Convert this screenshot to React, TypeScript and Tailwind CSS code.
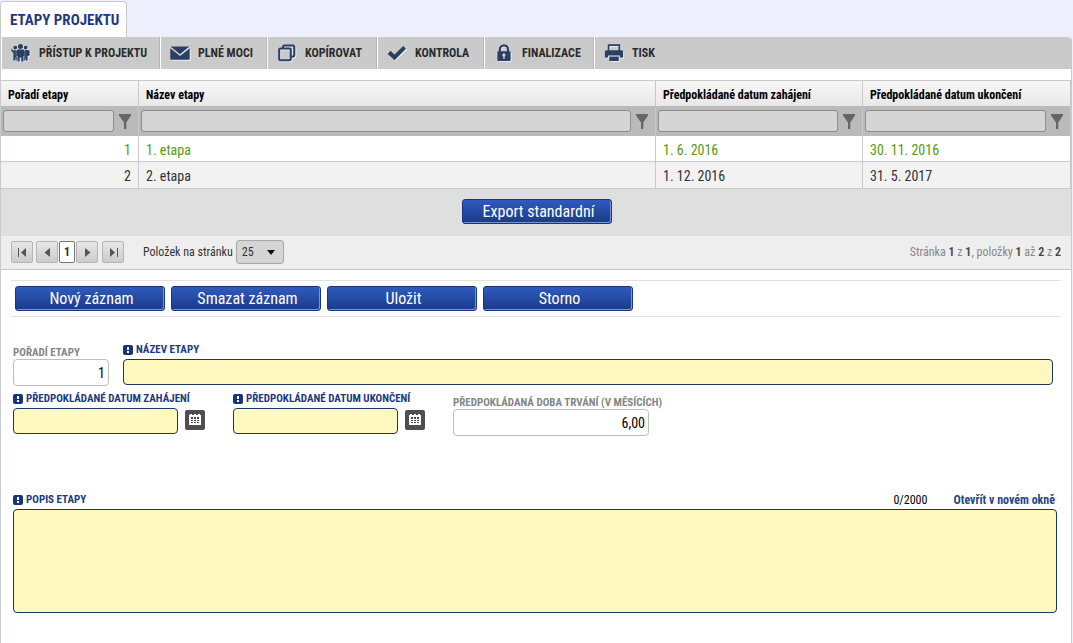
import type { ReactNode } from "react";

const blueButton =
  "h-[25px] w-[150px] rounded-[3px] border border-[#16357d] bg-linear-to-b from-[#2f5bbd] to-[#1b3a8a] pl-[3px] text-base leading-5 text-white shadow-[inset_-1px_-1px_0_#7d95cf]";
const requiredBox =
  "rounded-[4px] border border-[#1c355e] bg-[#fff9bf] px-1 text-sm text-black outline-none";
const optionalBox =
  "h-[27px] rounded-[4px] border border-[#bdbdbd] bg-white px-[3px] text-right text-sm text-black outline-none";
const pagerButton =
  "flex h-[22px] w-[22px] items-center justify-center rounded-[2px] border border-[#b4b4b4] bg-linear-to-b from-[#e6e6e6] to-[#cccccc]";

function IconFrame({ children }: { children: ReactNode }) {
  return (
    <svg
      width="20"
      height="20"
      viewBox="0 0 20 20"
      fill="#2b3f63"
      className="shrink-0 drop-shadow-[1px_1px_0_#e6edf5]"
      aria-hidden="true"
    >
      {children}
    </svg>
  );
}

function PeopleIcon() {
  return (
    <IconFrame>
      <circle cx="9.500" cy="3.400" r="2.500" />
      <circle cx="4.300" cy="4.600" r="1.900" />
      <circle cx="14.700" cy="4.600" r="1.900" />
      <path d="M6.400 6.500h6.200l1.200 1.500v5h-1.300v5.500h-2.200v-4h-1.600v4H6.500V13H5.200V8z" />
      <path d="M.4 5.400l1.500 1.900h3v5.900h.9v4.200H4.400v-3H4v3H2.400V10L.4 8z" />
      <path d="M18.600 8.200l-1.200-1.200h-3.300v6.200h-.9v4.200h1.400v-3h.4v3h1.600v-4.600h2z" />
    </IconFrame>
  );
}

function MailIcon() {
  return (
    <IconFrame>
      <path d="M.6 3.600h18.800L10 11.200z" />
      <path d="M.3 5.300L10 13l9.700-7.700v10.200q0 1.200-1.200 1.200H1.500q-1.200 0-1.200-1.200z" />
    </IconFrame>
  );
}

function CopyIcon() {
  return (
    <IconFrame>
      <path
        d="M6 5.400V3.800q0-1.200 1.200-1.200H16q1.300 0 1.300 1.300v8.300q0 1.300-1.300 1.300h-1.200M3.400 5.500h9.200q1.200 0 1.200 1.200v9.400q0 1.200-1.200 1.200H3.400q-1.200 0-1.200-1.200V6.700q0-1.200 1.200-1.200z"
        fill="none"
        stroke="#2b3f63"
        strokeWidth="2"
      />
    </IconFrame>
  );
}

function CheckIcon() {
  return (
    <IconFrame>
      <path d="M.6 11l3-3.200 3.900 3.600L16.200 3 19 5.800 7.600 17.200z" />
    </IconFrame>
  );
}

function LockIcon() {
  return (
    <IconFrame>
      <path d="M5.900 9V6.400a4.100 4.100 0 0 1 8.200 0V9" fill="none" stroke="#2b3f63" strokeWidth="2.3" />
      <path
        fillRule="evenodd"
        d="M4.500 8.200h11q1.100 0 1.100 1.100v7.600q0 1.100-1.100 1.100h-11q-1.100 0-1.100-1.100V9.300q0-1.100 1.100-1.100zM10 10.600a1.500 1.500 0 0 0-.7 2.800v2.400h1.400v-2.400a1.500 1.500 0 0 0-.7-2.800z"
      />
    </IconFrame>
  );
}

function PrinterIcon() {
  return (
    <IconFrame>
      <path d="M4.600 8V2.200h10.800V8" fill="none" stroke="#2b3f63" strokeWidth="1.700" />
      <path d="M2.400 7.300h15.200q1.500 0 1.500 1.500v5.700h-3.200v-2.100H4.100v2.100H.9V8.800q0-1.500 1.500-1.500z" />
      <path d="M5.300 13.600h9.400V18H5.300z" />
    </IconFrame>
  );
}

function FilterIcon() {
  return (
    <svg width="12" height="16" viewBox="0 0 12 16" fill="#666" aria-hidden="true">
      <path d="M0 0h12v1.500L7.300 8.500V15H5V8.500L0 1.500z" />
    </svg>
  );
}

function CalendarIcon() {
  return (
    <svg width="12" height="12" viewBox="0 0 12 12" shapeRendering="crispEdges" aria-hidden="true">
      <path d="M0 1h1V0h2v1h2V0h2v1h2V0h2v1h1v10H0z" fill="#fff" />
      <path
        d="M2 3h2v2H2zM5 3h2v2H5zM8 3h2v2H8zM2 6h2v1H2zM5 6h2v1H5zM8 6h2v1H8zM2 8h2v1H2zM5 8h2v1H5zM8 8h2v1H8z"
        fill="#4a4a4a"
      />
    </svg>
  );
}

function RequiredMark() {
  return (
    <svg width="10" height="10" viewBox="0 0 10 10" aria-hidden="true">
      <rect width="10" height="10" rx="2" fill="#16357d" />
      <path d="M4 2h2v3H4zM4 6h2v2H4z" fill="#fff" />
    </svg>
  );
}

function RequiredLabel({ id, children }: { id: string; children: ReactNode }) {
  return (
    <label
      htmlFor={id}
      className="flex h-[17px] items-center gap-[3px] whitespace-nowrap text-[11px] leading-4 font-bold text-[#1b3a80]"
    >
      <RequiredMark />
      {children}
    </label>
  );
}

function OptionalLabel({ id, children }: { id: string; children: ReactNode }) {
  return (
    <label
      htmlFor={id}
      className="mt-1 block h-[14px] whitespace-nowrap text-[11px] leading-4 font-bold text-[#858585]"
    >
      {children}
    </label>
  );
}

function DateField({ id, label }: { id: string; label: string }) {
  return (
    <div className="flex w-[220px] flex-col gap-px">
      <RequiredLabel id={id}>{label}</RequiredLabel>
      <div className="flex items-start gap-[7px]">
        <input id={id} type="text" className={`${requiredBox} h-[26px] w-[165px]`} />
        <button
          type="button"
          aria-label="Kalendář"
          className="mt-[2px] flex h-5 w-5 items-center justify-center rounded-[2px] bg-[#4f4f4f]"
        >
          <CalendarIcon />
        </button>
      </div>
    </div>
  );
}

const tools = [
  { label: "PŘÍSTUP K PROJEKTU", icon: <PeopleIcon />, width: "w-[159px]" },
  { label: "PLNÉ MOCI", icon: <MailIcon />, width: "w-[107px]" },
  { label: "KOPÍROVAT", icon: <CopyIcon />, width: "w-[110px]" },
  { label: "KONTROLA", icon: <CheckIcon />, width: "w-[107px]" },
  { label: "FINALIZACE", icon: <LockIcon />, width: "w-[110px]" },
  { label: "TISK", icon: <PrinterIcon />, width: "w-[90px]" },
];

const columns = [
  { name: "Pořadí etapy", width: "w-[138px]" },
  { name: "Název etapy", width: "" },
  { name: "Předpokládané datum zahájení", width: "w-[207px]" },
  { name: "Předpokládané datum ukončení", width: "w-[208px]" },
];

const rows = [
  { order: 1, name: "1. etapa", start: "1. 6. 2016", end: "30. 11. 2016", style: "h-[26px] bg-white text-[#559a0f]" },
  { order: 2, name: "2. etapa", start: "1. 12. 2016", end: "31. 5. 2017", style: "h-[27px] bg-[#f2f2f2] text-[#333]" },
];

const cell = "border-r border-b border-[#c9c9c9] px-[7px] pt-[2px] pb-0";

export default function App() {
  return (
    <div className="min-h-screen bg-[#edf0fc] pr-px font-['Roboto_Condensed','Liberation_Sans_Narrow',Roboto,sans-serif] text-[#333]">
      <nav className="flex h-[37px] items-end">
        <a
          href="#etapy"
          className="flex h-9 items-center rounded-t-[4px] border border-b-0 border-[#c9c9c9] bg-white pt-[2px] pr-[7px] pl-[9px] text-[15px] font-bold text-[#1f3a80]"
        >
          ETAPY PROJEKTU
        </a>
      </nav>
      <main className="min-h-[calc(100vh-37px)] rounded-tr-[4px] border-x border-[#c8cad2] bg-white">
        <div className="flex h-8 rounded-tr-[4px] bg-[#cacaca]">
          {tools.map((t, i) => (
            <button
              key={t.label}
              type="button"
              className={`${t.width} flex items-center gap-2 whitespace-nowrap border-l border-l-white pl-[9px] text-xs font-bold text-[#2b2b2b] ${i < 5 ? "border-r border-r-[#b5b5b5]" : ""}`}
            >
              {t.icon}
              {t.label}
            </button>
          ))}
        </div>

        <table className="mt-[11px] w-full table-fixed border-separate border-spacing-0 border-t border-[#c9c9c9] text-left">
          <thead>
            <tr className="h-[25px]">
              {columns.map((c) => (
                <th
                  key={c.name}
                  scope="col"
                  className={`${c.width} border-r border-[#c9c9c9] bg-linear-to-b from-[#f7f7f7] to-[#e8e8e8] px-[7px] pt-[2px] pb-0 text-xs font-bold whitespace-nowrap text-black`}
                >
                  {c.name}
                </th>
              ))}
            </tr>
            <tr className="h-[30px]">
              {columns.map((c) => (
                <td key={c.name} className="border-r border-[#c9c9c9] bg-[#bababa] p-0">
                  <div className="flex items-center gap-[5px] pr-[7px] pl-[2px]">
                    <input
                      type="text"
                      aria-label={`Filtr: ${c.name}`}
                      className="h-[22px] w-0 min-w-0 flex-1 rounded-[3px] border border-[#8c8c8c] bg-[#d5d5d5] px-1 text-sm outline-none"
                    />
                    <button type="button" aria-label={`Filtrovat: ${c.name}`} className="pt-[2px]">
                      <FilterIcon />
                    </button>
                  </div>
                </td>
              ))}
            </tr>
          </thead>
          <tbody>
            {rows.map((r) => (
              <tr key={r.order} className={`${r.style} text-sm leading-5`}>
                <td className={`${cell} text-right`}>{r.order}</td>
                <td className={cell}>{r.name}</td>
                <td className={cell}>{r.start}</td>
                <td className={cell}>{r.end}</td>
              </tr>
            ))}
          </tbody>
        </table>

        <div className="flex h-[47px] items-start justify-center bg-[#dfdfdf] pt-[10px] pl-[2px]">
          <button type="button" className={blueButton}>
            Export standardní
          </button>
        </div>

        <div className="flex h-[34px] items-center justify-between border-b border-[#c9c9c9] bg-[#eeeeee] px-[10px] pb-px text-xs">
          <div className="flex items-center">
            <button type="button" aria-label="První stránka" className={pagerButton}>
              <svg width="9" height="9" viewBox="0 0 9 9" fill="#555">
                <path d="M0 0h1v9H0zM8 0v9L3 4.500z" />
              </svg>
            </button>
            <button type="button" aria-label="Předchozí stránka" className={`${pagerButton} ml-[3px]`}>
              <svg width="9" height="9" viewBox="0 0 9 9" fill="#555">
                <path d="M7 0v9L1.500 4.500z" />
              </svg>
            </button>
            <button
              type="button"
              className="mx-px h-[22px] w-4 rounded-[2px] border border-[#777] bg-white text-xs font-bold"
            >
              1
            </button>
            <button type="button" aria-label="Další stránka" className={pagerButton}>
              <svg width="9" height="9" viewBox="0 0 9 9" fill="#555">
                <path d="M2 0v9l5.500-4.500z" />
              </svg>
            </button>
            <button type="button" aria-label="Poslední stránka" className={`${pagerButton} ml-1`}>
              <svg width="9" height="9" viewBox="0 0 9 9" fill="#555">
                <path d="M8 0h1v9H8zM1 0v9l5-4.500z" />
              </svg>
            </button>
            <label htmlFor="page-size" className="ml-[19px]">
              Položek na stránku
            </label>
            <div className="relative ml-[3px]">
              <select
                id="page-size"
                defaultValue="25"
                className="h-6 w-12 appearance-none rounded-[3px] border border-[#a8a8a8] bg-[#d5d5d5] pl-[5px] text-xs"
              >
                <option>25</option>
              </select>
              <svg
                width="8"
                height="5"
                viewBox="0 0 8 5"
                className="pointer-events-none absolute top-[10px] right-[9px]"
                aria-hidden="true"
              >
                <path d="M0 0h8L4 5z" fill="#111" />
              </svg>
            </div>
          </div>
          <p className="text-[#888] [&_b]:font-semibold [&_b]:text-[#444]">
            Stránka <b>1</b> z <b>1</b>, položky <b>1</b> až <b>2</b> z <b>2</b>
          </p>
        </div>

        <div className="mx-[10px] mt-[10px] flex gap-[6px] border-y border-[#e2e2e2] px-1 py-[5px]">
          <button type="button" className={blueButton}>Nový záznam</button>
          <button type="button" className={blueButton}>Smazat záznam</button>
          <button type="button" className={blueButton}>Uložit</button>
          <button type="button" className={blueButton}>Storno</button>
        </div>

        <form className="flex flex-col gap-1 pt-6 pr-[14px] pl-3">
          <div className="flex gap-[14px] pr-1">
            <div>
              <OptionalLabel id="order">POŘADÍ ETAPY</OptionalLabel>
              <input id="order" readOnly value="1" className={`${optionalBox} w-24`} />
            </div>
            <div className="flex flex-1 flex-col gap-px">
              <RequiredLabel id="name">NÁZEV ETAPY</RequiredLabel>
              <input id="name" type="text" className={`${requiredBox} h-[26px] w-full`} />
            </div>
          </div>
          <div className="flex">
            <DateField id="start" label="PŘEDPOKLÁDANÉ DATUM ZAHÁJENÍ" />
            <DateField id="end" label="PŘEDPOKLÁDANÉ DATUM UKONČENÍ" />
            <div className="pt-px">
              <OptionalLabel id="duration">PŘEDPOKLÁDANÁ DOBA TRVÁNÍ (V MĚSÍCÍCH)</OptionalLabel>
              <input id="duration" readOnly value="6,00" className={`${optionalBox} w-[196px]`} />
            </div>
          </div>
          <div className="mt-[51px] flex flex-col gap-px">
            <div className="flex h-[17px] items-center pr-[2px] text-xs">
              <RequiredLabel id="description">POPIS ETAPY</RequiredLabel>
              <span className="ml-auto text-black">0/2000</span>
              <a href="#okno" className="ml-[26px] font-bold text-[#1f4788]">
                Otevřít v novém okně
              </a>
            </div>
            <textarea id="description" className={`${requiredBox} h-[104px] w-full resize-none`} />
          </div>
        </form>
      </main>
    </div>
  );
}
